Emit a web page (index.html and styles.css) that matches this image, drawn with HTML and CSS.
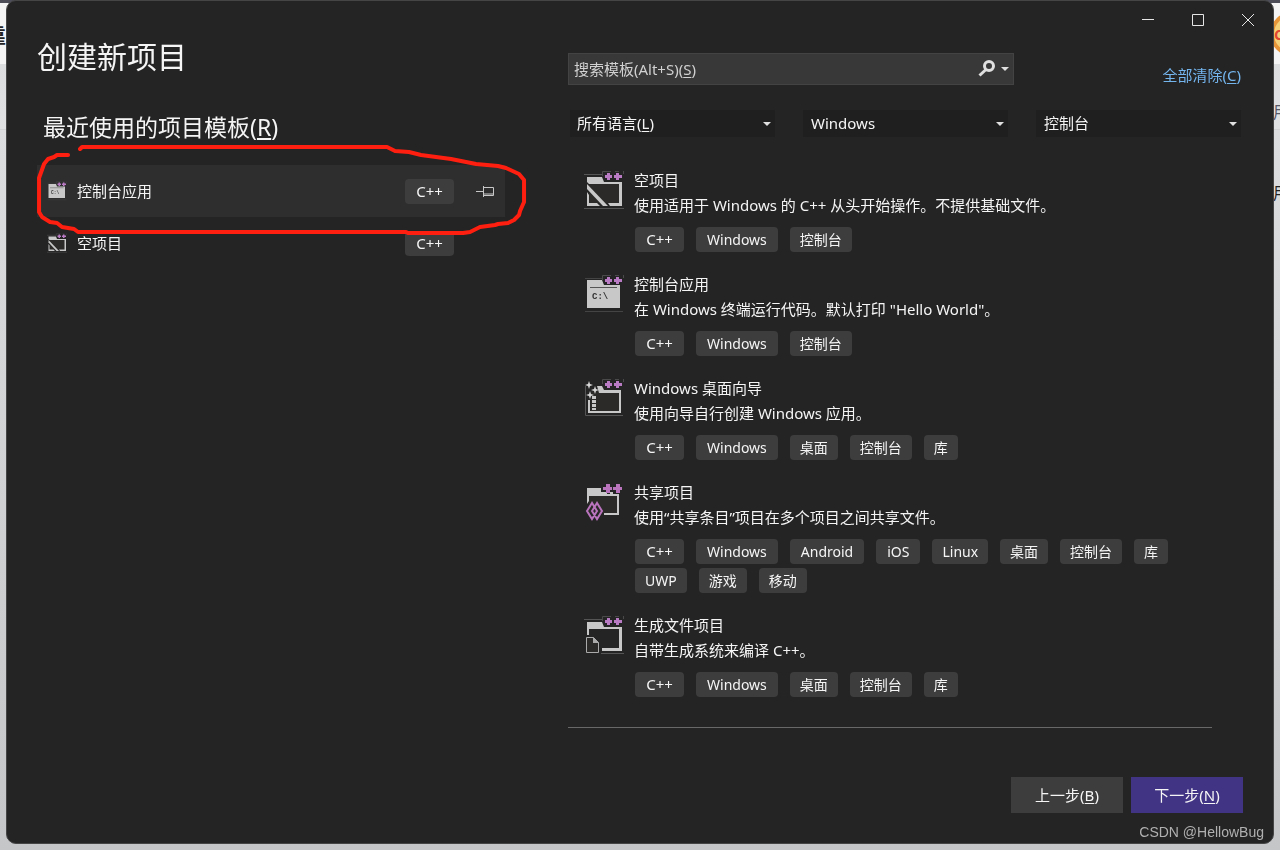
FILE: index.html
```
<!DOCTYPE html>
<html lang="zh-CN">
<head>
  <meta charset="UTF-8">
  <meta name="viewport" content="width=device-width, initial-scale=1.0">
  <title>创建新项目</title>
  <link rel="stylesheet" href="styles.css">
</head>
<body>
  <!-- page showing behind the dialog -->
  <div class="backdrop" aria-hidden="true">
    <span class="peek peek-left">靠</span>
    <span class="coin">C</span>
    <span class="peek peek-one">用</span>
    <span class="peek peek-two">用</span>
  </div>

  <!-- shared icon parts -->
  <svg class="defs" aria-hidden="true">
    <defs>
      <symbol id="plus" viewBox="0 0 40 40">
        <path d="M18.500 6V1.500H27M31 1.500h4M39.500 1v3" fill="none" stroke="#4a4a4a"/>
        <path d="M21 5h2V3h3v2h2v3h-2v2h-3V8h-2zM30 5h2V3h3v2h3v3h-3v2h-3V8h-2z" fill="#b97cc4"/>
      </symbol>
      <symbol id="icon-empty" viewBox="0 0 40 40">
        <path d="M0 4.500h18M0 38.500h40" stroke="#555"/>
        <path d="M5 13h30v20H5z" fill="#2b2a28"/>
        <path d="M3 7h15l2 5h18v24H26l-2-3h11V14H5L3 12zM3 22l2 3v8h8l3 3H3z" fill="#c8c8c8"/>
        <path d="M3 14v5l16 17h5z" fill="#c8c8c8"/>
        <use href="#plus"/>
      </symbol>
      <symbol id="icon-console" viewBox="0 0 40 40">
        <path d="M1 4.500h17M1 37.500h38" stroke="#444"/>
        <path d="M3 6h15l2 5h16v23H3z" fill="#c8c8c8"/>
        <path d="M6 13.500h27" stroke="#555"/>
        <text x="8" y="25" class="prompt">C:\</text>
        <use href="#plus"/>
      </symbol>
      <symbol id="icon-wizard" viewBox="0 0 40 40">
        <path d="M1.500 8v29.500H39" fill="none" stroke="#555"/>
        <path d="M7 13h29v20H7z" fill="#2b2a28"/>
        <path d="M13 8h5l2 4h17v23H4V22h2v11h29V15H15z" fill="#c8c8c8"/>
        <path d="M10 18v14" stroke="#c8c8c8" stroke-width="4" stroke-dasharray="3 1"/>
        <path d="M5 3l1 3 3 1-3 1-1 3-1-3-3-1 3-1zM11 8l1 3 3 1-3 1-1 3-1-3-3-1 3-1zM6 13l1 3 3 1-3 1-1 3-1-3-3-1 3-1z" fill="#d8d8d8"/>
        <use href="#plus"/>
      </symbol>
      <symbol id="icon-shared" viewBox="0 0 40 40">
        <path d="M5 14h29v17H5z" fill="#2b2a28"/>
        <path d="M3 6h14v4h6v2h3v-2h3v2h6v21H20v-2h13V14H5v5l-2 3z" fill="#c8c8c8"/>
        <path d="M19 5h3V2h4v3h2v3h-2v3h-4V8h-3zM29 5h3V2h4v3h2v3h-2v3h-4V8h-3z" fill="#b974bd"/>
        <path d="M8 21l-5 8 5 8 5-8zM13 21l-5 8 5 8 5-8z" fill="none" stroke="#b974bd" stroke-width="2"/>
      </symbol>
      <symbol id="icon-make" viewBox="0 0 40 40">
        <path d="M0 4.500h18M17 38.500h23" stroke="#555"/>
        <path d="M3 7h15l2 5h18v24H18v-3h17V14H5v6H3z" fill="#c8c8c8"/>
        <path d="M2.500 22.500h7l5 5v10h-12z" fill="#2b2a28" stroke="#aaa"/>
        <path d="M9 22l6 6H9z" fill="#aaa"/>
        <use href="#plus"/>
      </symbol>
    </defs>
  </svg>

  <div class="window">
    <div class="titlebar">
      <button aria-label="最小化"><svg width="14" height="14"><path d="M1 6.500h12"/></svg></button>
      <button aria-label="最大化"><svg width="14" height="14"><path d="M1.500 1.500h11v11h-11z"/></svg></button>
      <button aria-label="关闭"><svg width="14" height="14"><path d="M1 1l12 12M13 1L1 13"/></svg></button>
    </div>

    <main class="content">
      <section class="recent">
        <h1>创建新项目</h1>
        <h2>最近使用的项目模板(<u>R</u>)</h2>
        <div class="recent-wrap">
          <ul class="recent-list">
            <li class="selected">
              <svg class="icon-small"><use href="#icon-console"/></svg>
              <span>控制台应用</span>
              <span class="tag lang">C++</span>
              <button class="pin" aria-label="固定">
                <svg width="20" height="14"><path d="M1 7.500h7M8.500 2v11M9 3.500h9.500v8H9M9 10h9"/></svg>
              </button>
            </li>
            <li>
              <svg class="icon-small"><use href="#icon-empty"/></svg>
              <span>空项目</span>
              <span class="tag lang">C++</span>
            </li>
          </ul>
          <svg class="marker" viewBox="0 0 496 92" aria-hidden="true">
            <path d="M48 6l2-2h305l8 4 14 1 12 3 30 4 25 5 22 2 8 2 13 6 5 6v22l-4 9-1 4-5 5-6 3-10 1-3 1-15 2-10 5-7 1h-55l-2-1H46l-4-3-12-2-5-4-7-1-8-5-3-5V35l5-14 4-5 6-2 3-2h11"/>
          </svg>
        </div>
      </section>

      <section class="browse">
        <div class="search-row">
          <div class="search">
            <label for="search">搜索模板(Alt+S)(<u>S</u>)</label>
            <input id="search" type="text">
            <svg class="glass" width="18" height="18"><circle cx="11" cy="6" r="4.500"/><path d="M8 9.500L1.500 15.500"/></svg>
          </div>
          <a class="clear" href="#">全部清除(<u>C</u>)</a>
        </div>

        <div class="filters">
          <div class="filter">
            <label for="language">所有语言(<u>L</u>)</label>
            <select id="language">
              <option value=""></option>
            </select>
          </div>
          <div class="filter">
            <select aria-label="平台">
              <option>Windows</option>
            </select>
          </div>
          <div class="filter">
            <select aria-label="项目类型">
              <option>控制台</option>
            </select>
          </div>
        </div>

        <ul class="templates">
          <li>
            <svg class="icon"><use href="#icon-empty"/></svg>
            <div>
              <h3>空项目</h3>
              <p>使用适用于 Windows 的 C++ 从头开始操作。不提供基础文件。</p>
              <div class="tags">
                <span class="tag lang">C++</span>
                <span class="tag latin">Windows</span>
                <span class="tag">控制台</span>
              </div>
            </div>
          </li>
          <li>
            <svg class="icon"><use href="#icon-console"/></svg>
            <div>
              <h3>控制台应用</h3>
              <p>在 Windows 终端运行代码。默认打印 "Hello World"。</p>
              <div class="tags">
                <span class="tag lang">C++</span>
                <span class="tag latin">Windows</span>
                <span class="tag">控制台</span>
              </div>
            </div>
          </li>
          <li>
            <svg class="icon"><use href="#icon-wizard"/></svg>
            <div>
              <h3>Windows 桌面向导</h3>
              <p>使用向导自行创建 Windows 应用。</p>
              <div class="tags">
                <span class="tag lang">C++</span>
                <span class="tag latin">Windows</span>
                <span class="tag">桌面</span>
                <span class="tag">控制台</span>
                <span class="tag">库</span>
              </div>
            </div>
          </li>
          <li>
            <svg class="icon"><use href="#icon-shared"/></svg>
            <div>
              <h3>共享项目</h3>
              <p>使用“共享条目”项目在多个项目之间共享文件。</p>
              <div class="tags">
                <span class="tag lang">C++</span>
                <span class="tag latin">Windows</span>
                <span class="tag latin">Android</span>
                <span class="tag latin">iOS</span>
                <span class="tag">Linux</span>
                <span class="tag">桌面</span>
                <span class="tag">控制台</span>
                <span class="tag">库</span>
                <span class="tag">UWP</span>
                <span class="tag">游戏</span>
                <span class="tag">移动</span>
              </div>
            </div>
          </li>
          <li>
            <svg class="icon"><use href="#icon-make"/></svg>
            <div>
              <h3>生成文件项目</h3>
              <p>自带生成系统来编译 C++。</p>
              <div class="tags">
                <span class="tag lang">C++</span>
                <span class="tag latin">Windows</span>
                <span class="tag">桌面</span>
                <span class="tag">控制台</span>
                <span class="tag">库</span>
              </div>
            </div>
          </li>
        </ul>
      </section>
    </main>

    <footer class="actions">
      <button>上一步(<u>B</u>)</button>
      <button class="primary">下一步(<u>N</u>)</button>
    </footer>
    <span class="watermark">CSDN @HellowBug</span>
  </div>
</body>
</html>
```
FILE: styles.css
```
* {
  margin: 0;
  padding: 0;
  box-sizing: border-box;
}

body {
  font-family: 'Noto Sans', 'Noto Sans CJK SC', sans-serif;
  font-size: 15px;
  line-height: 25px;
  color: #f5f5f5;
  min-height: 100vh;
  padding: 0 6px 6px;
  display: flex;
}

ul {
  list-style: none;
}

u {
  text-underline-offset: 2px;
}

button,
input,
select {
  font: inherit;
  color: inherit;
  border: none;
  background: none;
}

/* Backdrop */
.backdrop {
  position: fixed;
  inset: 0;
  z-index: -1;
  overflow: hidden;
  background: linear-gradient(#4c4d57 3px, #f4f4f5 3px, #f4f4f5 64px, #dcdddf 64px, #e0e1e3 129px, #c8c9cb 129px, #dcdddf 130px, #c4c6c8);
}

.peek {
  position: absolute;
  color: #222;
  font-size: 16px;
}

.peek-left {
  left: -16px;
  top: 23px;
  font-size: 22px;
  font-weight: 700;
}

.peek-one {
  right: -9px;
  top: 100px;
  color: #555666;
}

.peek-two {
  right: -9px;
  top: 181px;
}

.coin {
  position: absolute;
  right: -34px;
  top: 12px;
  width: 44px;
  height: 44px;
  border-radius: 50%;
  background: #f5d27a;
  border: 4px solid #e8963a;
  color: #e2472f;
  font-weight: 700;
  line-height: 36px;
}

.defs {
  position: absolute;
  width: 0;
  height: 0;
}

/* Dialog */
.window {
  position: relative;
  flex: 1;
  min-width: 0;
  display: flex;
  flex-direction: column;
  background: #242424;
  border: 1px solid #454545;
  border-radius: 10px;
}

.titlebar {
  display: flex;
  justify-content: flex-end;
  height: 37px;
}

.titlebar button {
  width: 50px;
  display: flex;
  align-items: center;
  justify-content: center;
}

.titlebar svg {
  fill: none;
  stroke: #e6e6e6;
}

.content {
  display: grid;
  grid-template-columns: 468fr 675fr;
  gap: 63px;
  padding: 0 30px;
}

h1 {
  font-size: 30px;
  font-weight: 400;
  line-height: 38px;
}

h2 {
  font-size: 23px;
  font-weight: 400;
  line-height: 36px;
  margin: 33px 0 20px;
  padding-left: 6px;
}

.recent-wrap {
  position: relative;
}

.recent-list li {
  display: grid;
  grid-template-columns: 20px 1fr 49px 20px;
  align-items: center;
  column-gap: 10px;
  height: 52px;
  padding: 0 10px;
}

.recent-list .tag {
  margin-right: 11px;
  margin-left: -11px;
}

.recent-list .selected {
  background: #2e2e2e;
}

.icon-small {
  width: 20px;
  height: 20px;
}

.pin {
  display: flex;
}

.pin svg {
  fill: none;
  stroke: #c8c8c8;
}

/* red pen loop round the selected template */
.marker {
  position: absolute;
  left: -5px;
  top: -22px;
  width: 106%;
  pointer-events: none;
  fill: none;
  stroke: #ff1f10;
  stroke-width: 4;
  stroke-linecap: round;
  stroke-linejoin: round;
}

/* Search and filters */
.browse {
  padding: 15px 2px 0 0;
}

.search-row {
  display: flex;
  justify-content: space-between;
}

.search {
  flex: 0 1 446px;
  display: grid;
  grid-template-columns: 1fr 18px 17px;
  align-items: center;
  height: 32px;
  background: #383838;
  border: 1px solid #434343;
  color: #d0d0d0;
}

.search label,
.search input,
.filter label,
.filter select {
  grid-row: 1;
  grid-column: 1;
}

.search label {
  padding-left: 5px;
}

.search input {
  height: 30px;
  padding: 0 5px;
}

.glass {
  grid-row: 1;
  grid-column: 2;
  fill: none;
  stroke: #e0e0e0;
  stroke-width: 3;
}

.search::after,
.filter::after {
  content: '';
  justify-self: end;
  grid-row: 1;
  border: 4px solid transparent;
  border-top-color: #e0e0e0;
  border-bottom: none;
  margin-right: 4px;
  pointer-events: none;
}

.search::after {
  grid-column: 3;
}

.clear {
  align-self: flex-end;
  line-height: 20px;
  color: #74b5ee;
  text-decoration: none;
}

.filters {
  display: grid;
  grid-template-columns: repeat(3, 1fr);
  gap: 28px;
  padding-left: 2px;
  margin: 25px 0 31px;
}

.filter {
  display: grid;
  align-items: center;
  height: 27px;
  background: #1f1f1f;
}

.filter label {
  padding-left: 7px;
  pointer-events: none;
}

.filter select {
  appearance: none;
  width: 100%;
  height: 27px;
  padding: 0 8px;
}

.filter::after {
  grid-column: 1;
}

/* Templates */
.templates {
  margin-right: 29px;
  padding-bottom: 10px;
  border-bottom: 1px solid #686868;
}

.templates li {
  display: flex;
  gap: 10px;
  padding: 0 0 20px 16px;
}

.icon {
  flex: none;
  width: 40px;
  height: 40px;
  margin-top: 2px;
}

.prompt {
  font: bold 9px 'Liberation Mono', monospace;
  fill: #333;
}

h3 {
  font-size: 15px;
  font-weight: 400;
}

.tags {
  display: flex;
  flex-wrap: wrap;
  gap: 4px 12px;
  margin: 9px 0 0 1px;
}

.tag {
  padding: 0 10px;
  font-size: 14px;
  border-radius: 4px;
  background: #3d3d3d;
  text-align: center;
}

.tag.latin {
  padding: 0 11px;
}

.tag.lang {
  width: 49px;
  font-size: 15px;
}

/* Footer */
.actions {
  display: flex;
  justify-content: flex-end;
  gap: 8px;
  margin-top: auto;
  padding: 20px 30px 30px;
}

.actions button {
  width: 112px;
  height: 36px;
  background: #3d3d3d;
}

.actions .primary {
  background: #413484;
}

.watermark {
  position: absolute;
  right: 9px;
  bottom: 1px;
  font-family: 'Liberation Sans', sans-serif;
  font-size: 14px;
  line-height: 20px;
  color: #b0b0b0;
}
```
